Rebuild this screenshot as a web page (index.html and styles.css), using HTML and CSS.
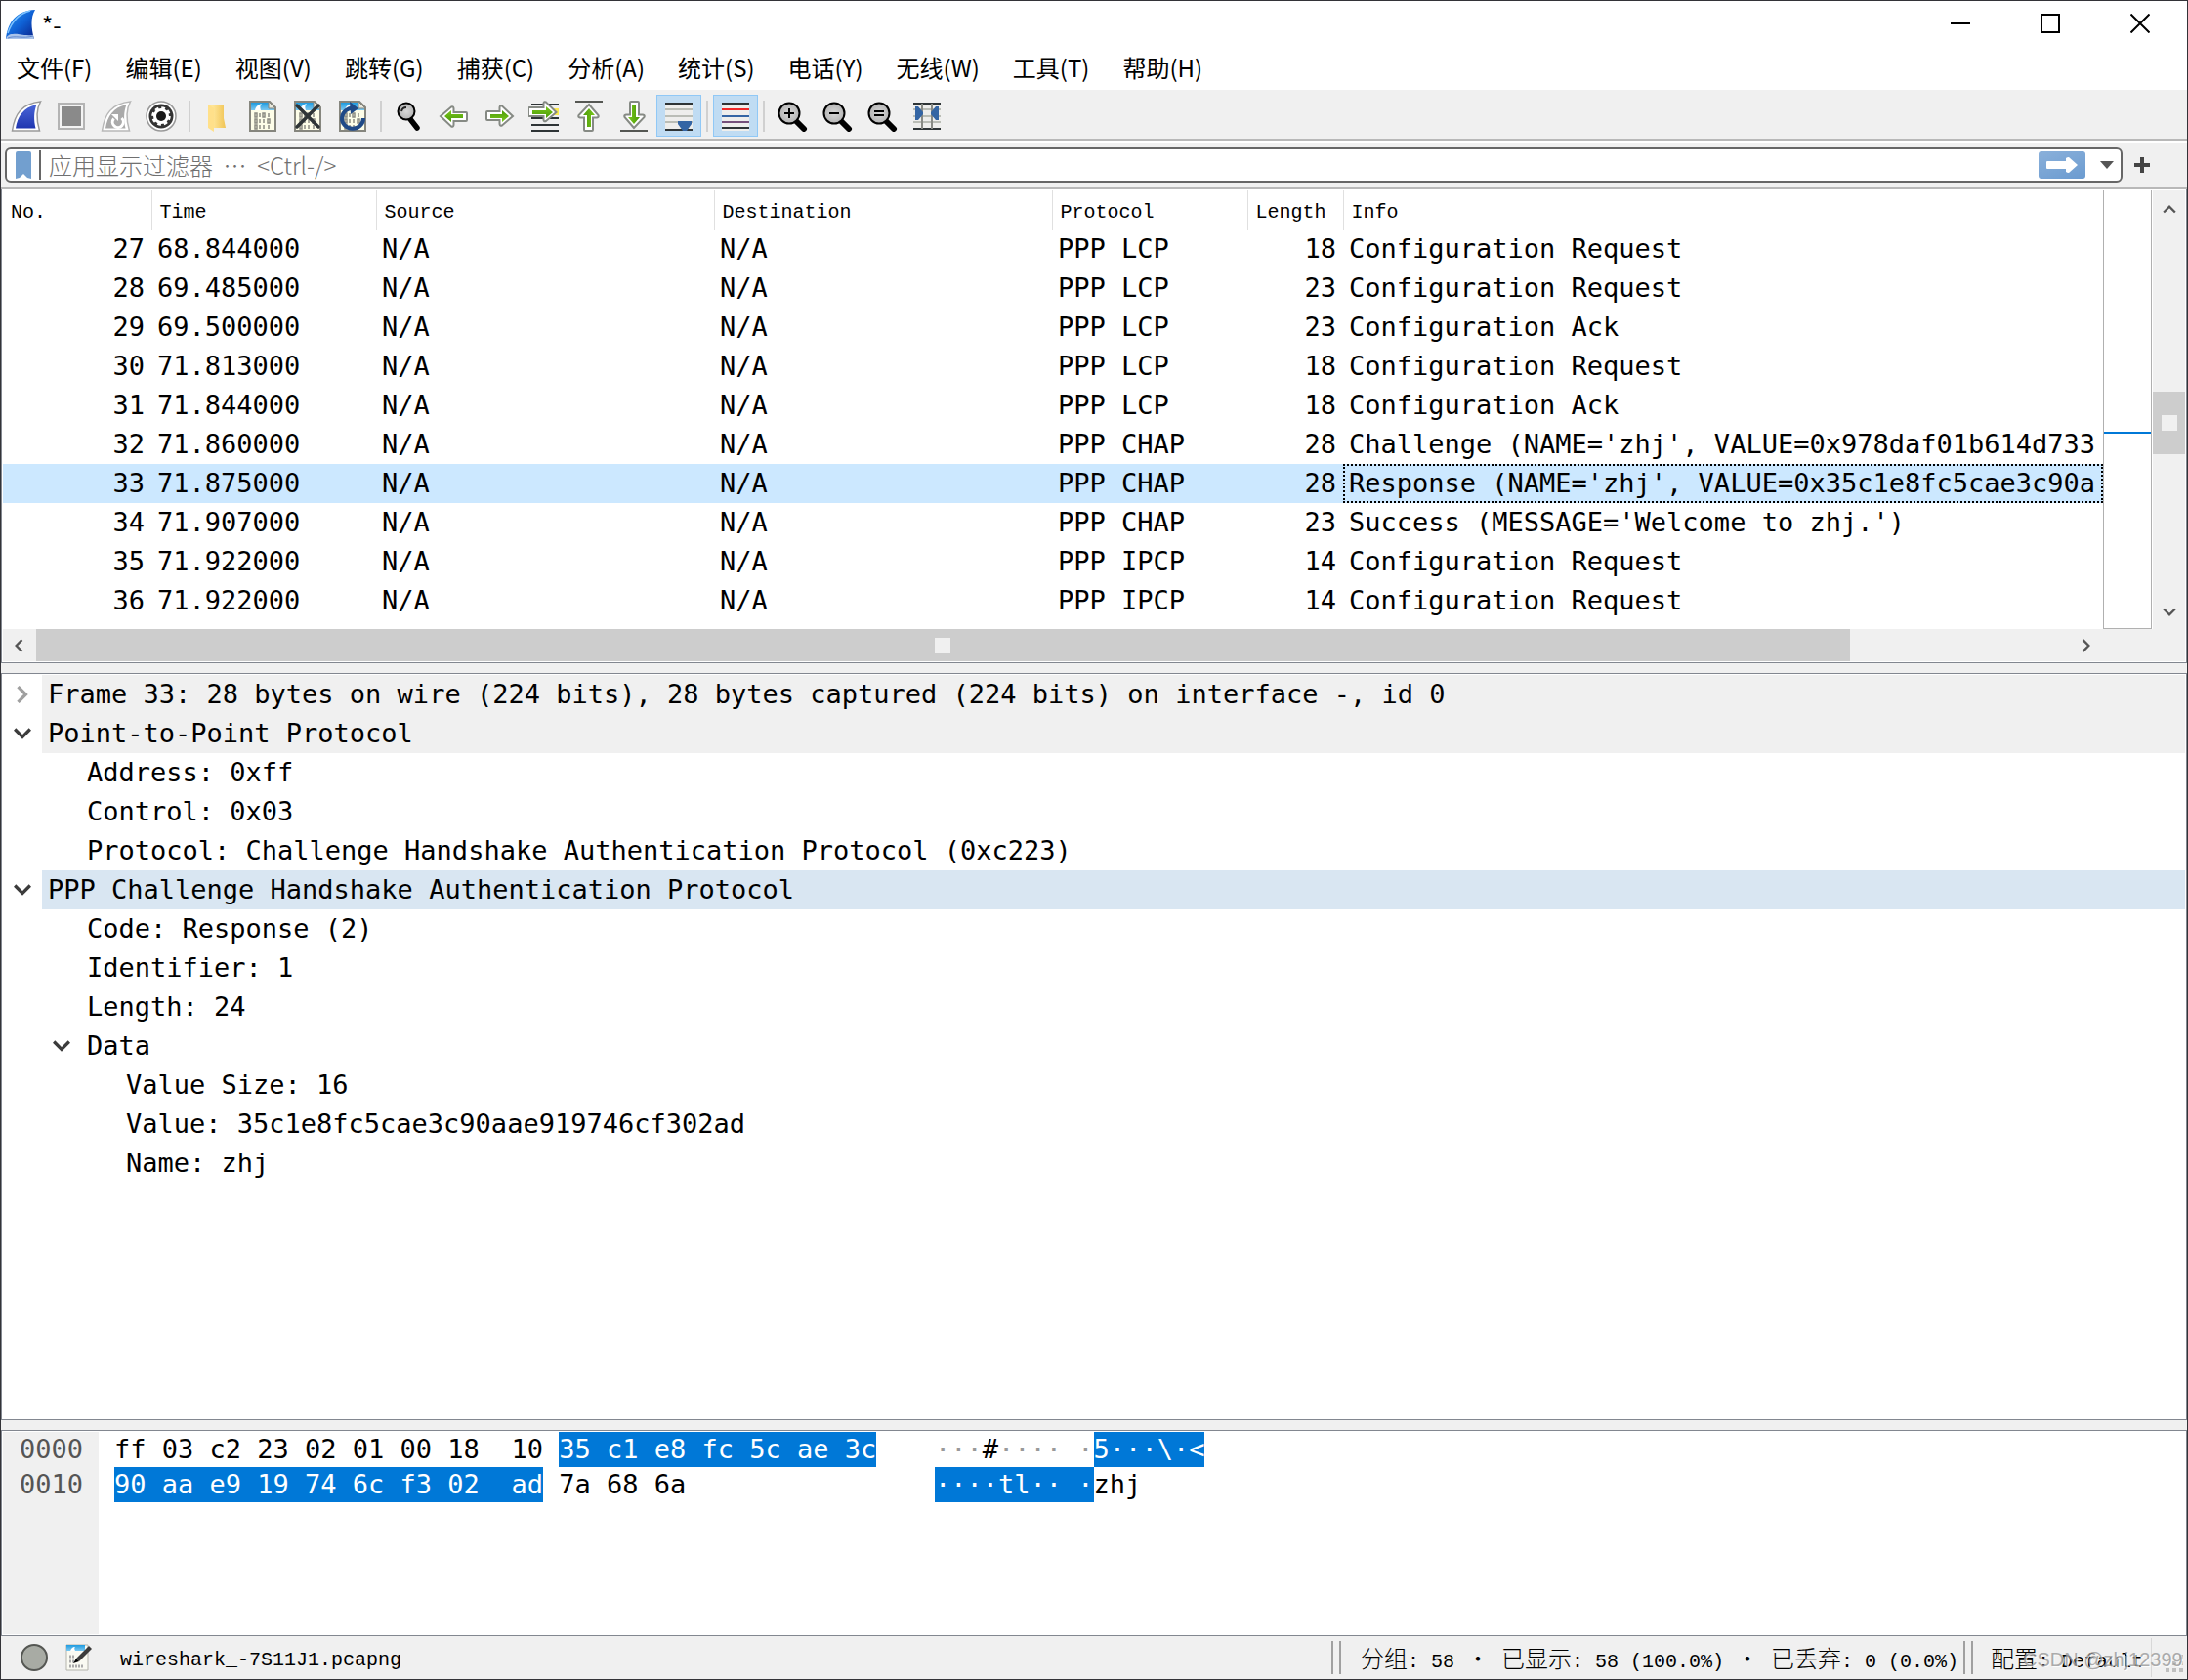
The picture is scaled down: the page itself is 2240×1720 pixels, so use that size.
FILE: index.html
```html
<!DOCTYPE html>
<html lang="zh-CN">
<head>
<meta charset="utf-8">
<title>*-</title>
<link rel="stylesheet" href="styles.css">
</head>
<body>
<svg class="defs" aria-hidden="true">
  <defs>
    <linearGradient id="logo" x1="0" y1="0" x2="1" y2="1"><stop offset="0" stop-color="#2d9bf0"/><stop offset=".5" stop-color="#0f62d6"/><stop offset="1" stop-color="#0a1f86"/></linearGradient>
    <linearGradient id="fin" x1="0" y1="0" x2="0" y2="1"><stop offset="0" stop-color="#4a66d8"/><stop offset="1" stop-color="#1f36b0"/></linearGradient>
    <linearGradient id="green" x1="0" y1="0" x2="0" y2="1"><stop offset="0" stop-color="#7cc81e"/><stop offset="1" stop-color="#4a9a06"/></linearGradient>
    <linearGradient id="folder" x1="0" y1="0" x2="1" y2="0"><stop offset="0" stop-color="#ffe596"/><stop offset="1" stop-color="#f0c455"/></linearGradient>
    <linearGradient id="sky" x1="0" y1="0" x2="0" y2="1"><stop offset="0" stop-color="#1e9be0"/><stop offset="1" stop-color="#7cc8f0"/></linearGradient>
    <radialGradient id="lens"><stop offset="0" stop-color="#d8d8d8"/><stop offset="1" stop-color="#b4b4b4"/></radialGradient>
    <g id="page">
      <path d="M3 1h20l6 6v24H3z" fill="#fdfde8" stroke="#86867e" stroke-width="2"/>
      <path d="M4 2h18l6 6v2H4z" fill="url(#sky)"/>
      <path d="M8 10c1-4 3-6 7-7-2 2-2 4-1 7z" fill="#fff"/>
      <path d="M22 1v7h7z" fill="#e8e8dc" stroke="#86867e"/>
      <g fill="none" stroke="#8c8c82" stroke-width="1.5">
        <path d="M8 13h2v4h-2zM13 13v4M16 13h2v4h-2zM22 13v4M8 19h2v4h-2zM13 19v4M17 19v4M21 19h2v4h-2zM8 25h2v4h-2zM13 25v4M17 25v4M22 25v4"/>
      </g>
    </g>
    <g id="arrow">
      <path d="M2 16 13 6.500q2-1 2.500 1.500V12H28q1 0 1 1v7q0 1-1 1H15.500v4q-.5 2.500-2.500 1.500z" fill="#fff" stroke="#868a84" stroke-width="2"/>
      <path d="M6 16l7-6v4h12v4H13v4z" fill="url(#green)"/>
    </g>
    <g id="zoomglass">
      <path d="M20 21l8 8" stroke="#000" stroke-width="6" stroke-linecap="round"/>
      <circle cx="13" cy="13" r="10.500" fill="url(#lens)" stroke="#000" stroke-width="2"/>
    </g>
  </defs>
</svg>
<div class="window">
  <header class="titlebar">
    <svg class="logo" viewBox="0 0 32 32"><path d="M1 31C3 14 11 2 31 1c-5 8-4 19-1 30z" fill="url(#logo)"/><path d="M1 31c1-3 3-5 7-5 7-1 9 2 21 1l1 4z" fill="#a9c3ea"/><path d="M3 30c8-3 15 1 26-2" fill="none" stroke="#5d86cf"/><path d="M3 25C7 13 14 5 26 2" fill="none" stroke="#7cc2ff" stroke-width="1.500"/></svg>
    <h1 class="title">*-</h1>
    <div class="winbuttons">
      <button aria-label="最小化"><svg viewBox="0 0 20 20"><path d="M0 10h20" /></svg></button>
      <button aria-label="最大化"><svg viewBox="0 0 20 20"><path d="M1 1h18v18H1z"/></svg></button>
      <button aria-label="关闭"><svg viewBox="0 0 20 20"><path d="M.5.5l19 19M19.500.5l-19 19"/></svg></button>
    </div>
  </header>
  <nav class="menubar">
    <button>文件(F)</button><button>编辑(E)</button><button>视图(V)</button><button>跳转(G)</button><button>捕获(C)</button><button>分析(A)</button><button>统计(S)</button><button>电话(Y)</button><button>无线(W)</button><button>工具(T)</button><button>帮助(H)</button>
  </nav>
  <div class="toolbar" role="toolbar">
    <button aria-label="开始捕获"><svg viewBox="0 0 32 32"><path d="M1.500 31C4 14 11 3 30.500 1c-5 9-4 20-1 30z" fill="#fff" stroke="#9a9a9a" stroke-width="1.500"/><path d="M5 28.500C7 16 13 7 26.500 4c-3 8-3 16-1 24.500z" fill="url(#fin)"/></svg></button>
    <button aria-label="停止捕获"><svg viewBox="0 0 32 32"><path d="M3 3h26v26H3z" fill="#f4f4f4" stroke="#b4b4b4" stroke-width="2"/><path d="M6 6h20v20H6z" fill="#8a8a8a"/></svg></button>
    <button aria-label="重新捕获"><svg viewBox="0 0 32 32"><path d="M1.500 31C4 14 11 3 30.500 1c-5 9-4 20-1 30z" fill="#fff" stroke="#b8b8b8" stroke-width="1.500"/><path d="M5 28.500C7 16 13 7 26.500 4c-3 8-3 16-1 24.500z" fill="#aaa"/><path d="M21.500 18a5.500 5.500 0 1 1-8 .5" fill="none" stroke="#fff" stroke-width="3"/><path d="M11 14h7v7z" fill="#fff"/></svg></button>
    <button aria-label="捕获选项"><svg viewBox="0 0 32 32"><circle cx="16" cy="16" r="15" fill="#fff" stroke="#999" stroke-width="1.500"/><circle cx="16" cy="16" r="12.500" fill="#333"/><circle cx="16" cy="16" r="8" fill="#fff"/><circle cx="16" cy="16" r="8" fill="none" stroke="#fff" stroke-width="3.500" stroke-dasharray="3.500 2.783"/><circle cx="16" cy="16" r="5" fill="#181818"/></svg></button>
    <span class="sep"></span>
    <button aria-label="打开"><svg viewBox="0 0 32 32"><path d="M6 4h11v24H6z" fill="#ffe596"/><path d="M11 4h11v14l2 10H11z" fill="url(#folder)"/><path d="M6 4l6 4v24l-6-4z" fill="#ffe08a"/></svg></button>
    <button aria-label="保存"><svg viewBox="0 0 32 32"><use href="#page"/></svg></button>
    <button aria-label="关闭文件"><svg viewBox="0 0 32 32"><use href="#page"/><path d="M5 5l22 22M27 5L5 27" stroke="#2e3436" stroke-width="3.500" stroke-linecap="round"/></svg></button>
    <button aria-label="重新加载"><svg viewBox="0 0 32 32"><use href="#page"/><path d="M27 18a11 10.500 0 1 1-9-10" fill="none" stroke="#204a87" stroke-width="4"/><path d="M13 1l9 7-8 6z" fill="#204a87"/></svg></button>
    <span class="sep"></span>
    <button aria-label="查找"><svg viewBox="0 0 32 32"><path d="M17 19l7 9" stroke="#000" stroke-width="5.500" stroke-linecap="round"/><circle cx="13" cy="11" r="8.500" fill="url(#lens)" stroke="#000" stroke-width="2"/><path d="M8 11q1-4 5-4" fill="none" stroke="#222" stroke-width="2"/></svg></button>
    <button aria-label="后退"><svg viewBox="0 0 32 32"><use href="#arrow"/></svg></button>
    <button aria-label="前进"><svg viewBox="0 0 32 32"><use href="#arrow" transform="rotate(180 16 16)"/></svg></button>
    <button aria-label="转到分组"><svg viewBox="0 0 32 32"><path d="M3 4h28M3 18h28M3 25h28M3 31h28" stroke="#2e3436" stroke-width="2"/><path d="M24 8h7v7h-7z" fill="#fce94f"/><path d="M28.500 12 18 1.500q-2-1-2.500 1V7H1q-1 0-1 1v7q0 1 1 1h14.500v4q.5 2 2.500 1z" fill="#fff" stroke="#868a84" stroke-width="2"/><path d="M25 12l-7-6v4H4v4h14v4z" fill="url(#green)"/></svg></button>
    <button aria-label="首个分组"><svg viewBox="0 0 32 32"><path d="M2 1h28" stroke="#555753" stroke-width="2"/><use href="#arrow" transform="translate(0 2) rotate(90 16 16)"/></svg></button>
    <button aria-label="最新分组"><svg viewBox="0 0 32 32"><path d="M2 31h28" stroke="#555753" stroke-width="2"/><use href="#arrow" transform="translate(0 -2) rotate(-90 16 16)"/></svg></button>
    <button class="on" aria-label="自动滚动"><svg viewBox="0 0 32 32"><path d="M2 3h28v28H2z" fill="#eeeeec"/><path d="M2 9h28M2 16h28M2 22h28" stroke="#babdb6" stroke-width="2"/><path d="M2 3h28M2 30h28" stroke="#2e3436" stroke-width="2"/><path d="M15 21h14v3l-5 7h-4l-5-7z" fill="#3465a4"/></svg></button>
    <span class="sep"></span>
    <button class="on" aria-label="着色"><svg viewBox="0 0 32 32"><path d="M2 3h28v28H2z" fill="#eeeeec"/><g stroke-width="2"><path d="M2 3h28M2 28h28" stroke="#2e3436"/><path d="M2 9h28" stroke="#ef2929"/><path d="M2 16h28" stroke="#3465a4"/><path d="M2 22h28" stroke="#75507b"/></g></svg></button>
    <span class="sep"></span>
    <button aria-label="放大"><svg viewBox="0 0 32 32"><use href="#zoomglass"/><path d="M8 13h10M13 8v10" stroke="#000" stroke-width="2"/></svg></button>
    <button aria-label="缩小"><svg viewBox="0 0 32 32"><use href="#zoomglass"/><path d="M8 13h10" stroke="#000" stroke-width="2"/></svg></button>
    <button aria-label="原始大小"><svg viewBox="0 0 32 32"><use href="#zoomglass"/><path d="M8 11h10M8 15h10" stroke="#000" stroke-width="2"/></svg></button>
    <button aria-label="调整列宽"><svg viewBox="0 0 32 32"><path d="M2 3h28v27H2z" fill="#eeeeec"/><path d="M2 9h28M2 16h28M2 22h28" stroke="#babdb6" stroke-width="2"/><path d="M2 3h28M2 29h28" stroke="#2e3436" stroke-width="2"/><path d="M11 3v26M21 3v26" stroke="#888a85" stroke-width="2"/><path d="M4 6h3l5 6v2l-5 6H4zM28 6h-3l-5 6v2l5 6h3z" fill="#3465a4"/></svg></button>
  </div>
  <div class="filterbar">
    <div class="field">
      <button class="bookmark" aria-label="书签"><svg viewBox="0 0 16 28"><path d="M0 2q0-2 2-2h12q2 0 2 2v26l-4-1-4-4-4 4-4 1z" fill="#729fcf"/></svg></button>
      <input type="text" aria-label="显示过滤器" placeholder="应用显示过滤器&nbsp; ⋯&nbsp; &lt;Ctrl-/&gt;">
      <button class="apply" aria-label="应用"><svg viewBox="0 0 48 28"><path d="M9 10h19V7q1-1 3-1l9 8-9 8q-2 0-3-1v-3H9q-1 0-1-1v-6q0-1 1-1z" fill="#fff"/></svg></button>
      <button class="drop" aria-label="历史"><svg viewBox="0 0 14 8"><path d="M0 0h14l-7 8z" fill="#555"/></svg></button>
    </div>
    <button class="plus" aria-label="添加"><svg viewBox="0 0 16 16"><path d="M8 0v16M0 8h16" stroke="#444" stroke-width="4"/></svg></button>
  </div>
  <main class="panes">
    <section class="pane packets">
      <div class="listrow">
        <div class="tablewrap">
          <table>
            <colgroup><col class="c-no"><col class="c-time"><col class="c-addr"><col class="c-addr"><col class="c-proto"><col class="c-len"><col></colgroup>
            <thead><tr><th>No.</th><th>Time</th><th>Source</th><th>Destination</th><th>Protocol</th><th>Length</th><th>Info</th></tr></thead>
            <tbody>
              <tr><td>27</td><td>68.844000</td><td>N/A</td><td>N/A</td><td>PPP LCP</td><td>18</td><td>Configuration Request</td></tr>
              <tr><td>28</td><td>69.485000</td><td>N/A</td><td>N/A</td><td>PPP LCP</td><td>23</td><td>Configuration Request</td></tr>
              <tr><td>29</td><td>69.500000</td><td>N/A</td><td>N/A</td><td>PPP LCP</td><td>23</td><td>Configuration Ack</td></tr>
              <tr><td>30</td><td>71.813000</td><td>N/A</td><td>N/A</td><td>PPP LCP</td><td>18</td><td>Configuration Request</td></tr>
              <tr><td>31</td><td>71.844000</td><td>N/A</td><td>N/A</td><td>PPP LCP</td><td>18</td><td>Configuration Ack</td></tr>
              <tr><td>32</td><td>71.860000</td><td>N/A</td><td>N/A</td><td>PPP CHAP</td><td>28</td><td>Challenge (NAME='zhj', VALUE=0x978daf01b614d733</td></tr>
              <tr class="selected"><td>33</td><td>71.875000</td><td>N/A</td><td>N/A</td><td>PPP CHAP</td><td>28</td><td>Response (NAME='zhj', VALUE=0x35c1e8fc5cae3c90a</td></tr>
              <tr><td>34</td><td>71.907000</td><td>N/A</td><td>N/A</td><td>PPP CHAP</td><td>23</td><td>Success (MESSAGE='Welcome to zhj.')</td></tr>
              <tr><td>35</td><td>71.922000</td><td>N/A</td><td>N/A</td><td>PPP IPCP</td><td>14</td><td>Configuration Request</td></tr>
              <tr><td>36</td><td>71.922000</td><td>N/A</td><td>N/A</td><td>PPP IPCP</td><td>14</td><td>Configuration Request</td></tr>
              <tr><td>37</td><td>71.938000</td><td>N/A</td><td>N/A</td><td>PPP IPCP</td><td>14</td><td>Configuration Ack</td></tr>
            </tbody>
          </table>
        </div>
        <div class="minimap"><span class="mark"></span></div>
        <div class="vscroll">
          <svg class="chev" viewBox="0 0 12 8"><path d="M1 7l5-5 5 5"/></svg>
          <span class="thumb"></span>
          <svg class="chev" viewBox="0 0 12 8"><path d="M1 1l5 5 5-5"/></svg>
        </div>
      </div>
      <div class="hscroll">
        <svg class="chev side" viewBox="0 0 8 12"><path d="M7 1L2 6l5 5"/></svg>
        <span class="thumb"></span>
        <span class="rest"></span>
        <svg class="chev side" viewBox="0 0 8 12"><path d="M1 1l5 5-5 5"/></svg>
      </div>
    </section>
    <section class="pane details">
      <div class="node top"><button class="twist shut" aria-label="展开"><svg viewBox="0 0 16 16"><path d="M4 1l7 7-7 7"/></svg></button><span>Frame 33: 28 bytes on wire (224 bits), 28 bytes captured (224 bits) on interface -, id 0</span></div>
      <div class="node top"><button class="twist" aria-label="折叠"><svg viewBox="0 0 16 16"><path d="M1 4l7 7 7-7"/></svg></button><span>Point-to-Point Protocol</span></div>
      <div class="node l1"><span>Address: 0xff</span></div>
      <div class="node l1"><span>Control: 0x03</span></div>
      <div class="node l1"><span>Protocol: Challenge Handshake Authentication Protocol (0xc223)</span></div>
      <div class="node top chosen"><button class="twist" aria-label="折叠"><svg viewBox="0 0 16 16"><path d="M1 4l7 7 7-7"/></svg></button><span>PPP Challenge Handshake Authentication Protocol</span></div>
      <div class="node l1"><span>Code: Response (2)</span></div>
      <div class="node l1"><span>Identifier: 1</span></div>
      <div class="node l1"><span>Length: 24</span></div>
      <div class="node sub"><button class="twist" aria-label="折叠"><svg viewBox="0 0 16 16"><path d="M1 4l7 7 7-7"/></svg></button><span>Data</span></div>
      <div class="node l2"><span>Value Size: 16</span></div>
      <div class="node l2"><span>Value: 35c1e8fc5cae3c90aae919746cf302ad</span></div>
      <div class="node l2"><span>Name: zhj</span></div>
    </section>
    <section class="pane bytes">
      <div class="offsets"><div>0000</div><div>0010</div></div>
      <div class="hex"><div>ff 03 c2 23 02 01 00 18  10 <mark>35 c1 e8 fc 5c ae 3c</mark></div><div><mark>90 aa e9 19 74 6c f3 02  ad</mark> 7a 68 6a</div></div>
      <div class="ascii"><div><i>···</i>#<i>····</i> <i>·</i><mark>5···\·&lt;</mark></div><div><mark>····tl·· ·</mark>zhj</div></div>
    </section>
  </main>
  <footer class="statusbar">
    <button aria-label="专家信息"><svg viewBox="0 0 28 28"><circle cx="14" cy="14" r="13" fill="#a8aba4" stroke="#555753" stroke-width="2"/></svg></button>
    <button aria-label="注释"><svg viewBox="0 0 28 28"><path d="M1 1h22v26H1z" fill="#fafaf2" stroke="#b4b4ac"/><path d="M1 1h19v6H1z" fill="url(#sky)"/><path d="M5 7c1-2 2-4 5-4-1 1-1 2 0 4z" fill="#fff"/><path d="M4 13h6M4 18h6M4 23h14" stroke="#aaa" stroke-width="3" stroke-dasharray="2 1"/><path d="M11 15L24 2l3 3-13 13z" fill="#3c3c3c"/><path d="M11 15l3 3-6 2z" fill="#000"/></svg></button>
    <span class="file">wireshark_-7S11J1.pcapng</span>
    <span class="grip2"></span>
    <span class="counts"><b>分组</b>: 58 <b>•</b> <b>已显示</b>: 58 (100.0%) <b>•</b> <b>已丢弃</b>: 0 (0.0%)</span>
    <span class="grip2"></span>
    <span class="profile"><b>配置</b>: Default</span>
    <span class="watermark">CSDN @zhj12399</span>
    <svg class="sizegrip" viewBox="0 0 18 18"><path d="M14 0h4v4h-4zM7 7h4v4H7zM14 7h4v4h-4zM0 14h4v4H0zM7 14h4v4H7zM14 14h4v4h-4z" fill="#bfbfbf"/></svg>
  </footer>
</div>
</body>
</html>
```
FILE: styles.css
```css
* { box-sizing: border-box; }
body { margin: 0; font-family: "Noto Sans CJK SC", sans-serif; font-size: 24px; color: #000; }
button { border: 0; padding: 0; background: none; font: inherit; color: inherit; display: flex; align-items: center; justify-content: center; }
svg { display: block; flex: none; }
.defs { position: absolute; width: 0; height: 0; }

.window { display: flex; flex-direction: column; height: 100vh; min-height: 900px; border: 1px solid #333338; background: #f0f0f0; overflow: hidden; }

.titlebar { display: flex; height: 48px; background: #fff; padding: 0 2px 0 4px; }
.logo { width: 32px; height: 32px; margin-top: 8px; }
.title { margin: 4px 0 0 6px; font-size: 24px; line-height: 40px; font-weight: 400; }
.winbuttons { display: flex; margin-left: auto; }
.winbuttons button { width: 92px; height: 46px; }
.winbuttons svg { width: 20px; height: 20px; fill: none; stroke: #000; stroke-width: 2; }

.menubar { display: flex; gap: 34px; height: 45px; padding: 0 16px; background: #fff; border-bottom: 2px solid #f0f0f0; line-height: 40px; }
.menubar button { height: 40px; }

.toolbar { display: flex; align-items: center; height: 50px; padding: 1px 3px 0; border-bottom: 2px solid #b8b8b8; }
.toolbar button { width: 46px; height: 43px; }
.toolbar svg { width: 32px; height: 32px; }
.toolbar .on { background: #c0dcf3; border: 1px solid #90c8f6; }
.sep { width: 12px; height: 32px; background: linear-gradient(#d0d0d0, #d0d0d0) center / 2px 100% no-repeat; }

.filterbar { display: flex; align-items: center; height: 49px; padding: 0 4px; border-top: 2px solid #fff; border-bottom: 2px solid #b8b8b8; }
.field { display: flex; align-items: center; flex: 1; height: 36px; border: 2px solid #666; border-radius: 6px; background: #fff; }
.bookmark { width: 35px; height: 30px; border-right: 2px solid #666; }
.bookmark svg { width: 16px; height: 28px; }
.field input { flex: 1; min-width: 0; height: 32px; border: 0; outline: 0; padding: 0 8px; background: none; font: 300 24px "Noto Sans CJK SC", sans-serif; }
.field input::placeholder { color: #707070; opacity: 1; }
.apply { width: 48px; height: 28px; border-radius: 3px; background: linear-gradient(160deg, #8ab0da, #6b9bd0); }
.apply svg { width: 48px; height: 28px; }
.drop { width: 34px; height: 28px; margin-left: 2px; }
.drop svg { width: 14px; height: 8px; margin-left: 6px; }
.plus { width: 40px; height: 36px; margin-right: 22px; }
.plus svg { width: 16px; height: 16px; }

.panes { display: flex; flex-direction: column; gap: 10px; flex: 1; min-height: 0; font-family: "DejaVu Sans Mono", monospace; font-size: 27px; }
.pane { border: 1px solid #828790; padding: 1px; background: #fff; min-height: 0; overflow: hidden; }
.packets { flex: 486 1 0; display: flex; flex-direction: column; }
.details { flex: 767 1 0; }
.bytes { flex: 209 1 0; display: flex; line-height: 36px; white-space: pre; }

.listrow { display: flex; flex: 1; min-height: 0; }
.tablewrap { flex: 1; min-width: 0; overflow: hidden; margin-bottom: 1px; }
table { width: 100%; table-layout: fixed; border-collapse: collapse; }
.c-no { width: 152px; }
.c-time { width: 230px; }
.c-addr { width: 346px; }
.c-proto { width: 200px; }
.c-len { width: 98px; }
th { height: 40px; padding: 4px 0 0 8px; text-align: left; font: 400 20px "Liberation Mono", monospace; border-right: 1px solid #e0e0e0; }
th:last-child { border-right: 0; }
td { height: 40px; padding: 0 0 0 6px; line-height: 38px; white-space: pre; overflow: hidden; }
td:nth-child(1), td:nth-child(6) { text-align: right; padding-right: 7px; }
.selected { background: #cce8ff; }
.selected td:last-child { outline: 2px dotted #000; outline-offset: -2px; }
.minimap { width: 50px; border: 1px solid #b0b0b0; border-top: 0; padding-top: 247px; }
.mark { display: block; height: 2px; background: #0078d7; }
.vscroll { display: flex; flex-direction: column; align-items: center; width: 34px; padding: 14px 0 12px; background: #f0f0f0; border-left: 1px solid #fff; }
.chev { width: 14px; height: 10px; fill: none; stroke: #555; stroke-width: 2; }
.chev.side { width: 10px; height: 14px; }
.thumb { background: #cdcdcd; display: flex; align-items: center; justify-content: center; }
.thumb::after { content: ""; width: 16px; height: 16px; background: #f0f0f0; }
.vscroll .thumb { width: 33px; height: 64px; margin: 182px 0 auto; }
.hscroll { display: flex; align-items: center; height: 33px; background: #f0f0f0; padding: 0 96px 0 11px; }
.hscroll .thumb { flex: 1856 1 0; height: 33px; margin-left: 13px; }
.rest { flex: 237 1 0; }

.node { display: flex; align-items: center; height: 40px; line-height: 40px; white-space: pre; }
.node.top > span { flex: 1; background: #f0f0f0; padding-left: 6px; height: 40px; }
.node.chosen > span { background: #d9e6f2; }
.twist { width: 40px; height: 40px; }
.twist svg { width: 18px; height: 18px; fill: none; stroke: #3c3c3c; stroke-width: 3; }
.twist.shut svg { stroke: #a0a0a0; }
.l1 { padding-left: 86px; }
.sub { padding-left: 40px; }
.sub > span { padding-left: 6px; }
.l2 { padding-left: 126px; }

.offsets { width: 98px; background: #f0f0f0; color: #555; padding-left: 17px; }
.hex { width: 840px; padding-left: 16px; }
.ascii { padding-left: 16px; }
.bytes div > div { height: 36px; }
mark { display: inline-block; height: 36px; background: #0078d7; color: #fff; }
i { font-style: normal; color: #999; }

.statusbar { display: flex; align-items: center; height: 44px; padding-left: 20px; font-family: "Liberation Mono", "Noto Sans CJK SC", monospace; font-size: 20px; white-space: pre; }
.statusbar b { font: 300 24px/40px "Noto Sans CJK SC", sans-serif; }
.statusbar svg { width: 28px; height: 28px; }
.statusbar button + button { margin-left: 18px; }
.file { flex: 1; padding: 4px 0 0 28px; }
.grip2 { flex: none; width: 10px; height: 34px; border: 2px solid #a0a0a0; border-width: 0 2px; }
.counts { flex: none; width: 637px; padding-left: 20px; }
.profile { flex: none; width: 183px; padding-left: 18px; height: 40px; border-right: 1px solid #d8d8d8; }
.watermark { flex: none; width: 162px; margin: 4px 0 0 -132px; font: 20px "Liberation Sans", sans-serif; color: #9a9a9a; text-shadow: 1px 1px #fff; opacity: .8; }
.statusbar .sizegrip { width: 18px; height: 18px; margin: 12px 4px 0 -16px; }
```
